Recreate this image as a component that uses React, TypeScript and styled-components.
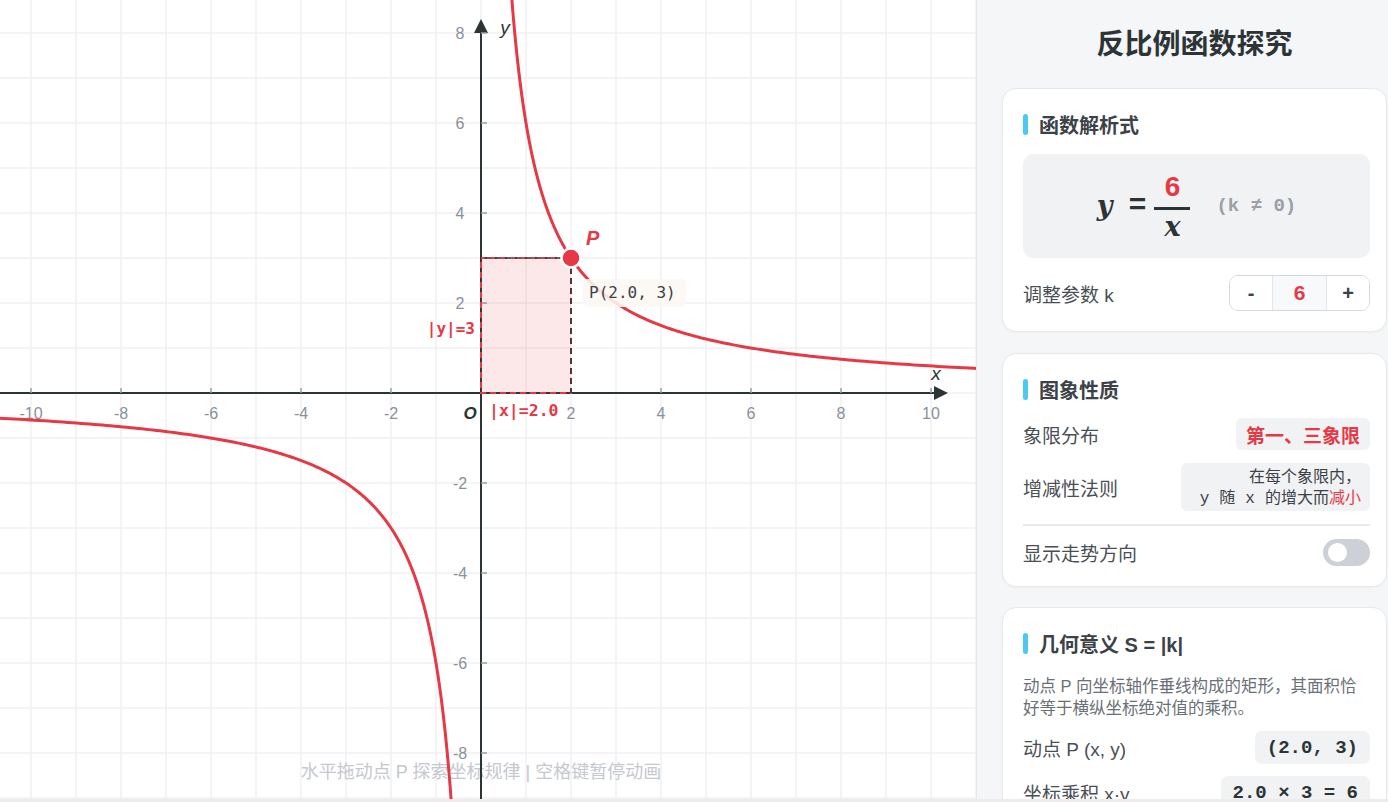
import React from 'react';
import styled, { createGlobalStyle } from 'styled-components';

const K = 6;
const PX = 2.0;
const PY = K / PX;

const OX = 481;
const OY = 393;
const U = 45;
const W = 976;
const H = 799;

const RED = '#e63946';
const INK = '#2d3436';

const sx = (x: number) => OX + x * U;
const sy = (y: number) => OY - y * U;

const GlobalStyle = createGlobalStyle`
  html, body {
    margin: 0;
    padding: 0;
    background: #eeebe8;
  }
  body {
    font-family: "Liberation Sans", "Noto Sans CJK SC", sans-serif;
  }
`;

const Shell = styled.div`
  display: flex;
  height: ${H}px;
  overflow: hidden;
`;

const GraphArea = styled.div`
  flex: 0 0 ${W}px;
  background: #ffffff;
  overflow: hidden;

  svg {
    display: block;
  }
`;

const Panel = styled.aside`
  flex: 1;
  background: #f5f6f8;
  border-left: 1px solid #e5e7eb;
  padding: 25px 1px 0 25px;
  overflow: hidden;
`;

const PanelTitle = styled.h1`
  margin: 0 0 23px;
  height: 40px;
  line-height: 40px;
  text-align: center;
  font-size: 28px;
  font-weight: 700;
  color: ${INK};
`;

const Card = styled.section<{ $mt?: number }>`
  margin-top: ${(p) => p.$mt ?? 0}px;
  background: #ffffff;
  border: 1px solid #e6e8eb;
  border-radius: 14px;
  padding: 21px 16px 20px 20px;
  box-shadow: 0 1px 3px rgba(0, 0, 0, 0.03);
`;

const SectionTitle = styled.h2`
  margin: 0;
  display: flex;
  align-items: center;
  gap: 11px;
  height: 28px;
  font-size: 20px;
  font-weight: 700;
  color: #3d4248;

  &::before {
    content: '';
    width: 5px;
    height: 21px;
    border-radius: 3px;
    background: #4cc9f0;
  }
`;

const FormulaBox = styled.div`
  margin-top: 16px;
  height: 104px;
  border-radius: 10px;
  background: #f1f2f4;
  display: flex;
  align-items: center;
  justify-content: center;
`;

const MathVar = styled.span`
  font-family: "DejaVu Serif", "Liberation Serif", serif;
  font-style: italic;
  font-weight: 700;
  font-size: 27px;
  line-height: 34px;
  color: ${INK};
`;

const Equals = styled.span`
  font-family: "Liberation Mono", "Courier New", monospace;
  font-weight: 700;
  font-size: 30px;
  color: ${INK};
  margin: 0 8px 0 16px;
`;

const Fraction = styled.span`
  display: inline-flex;
  flex-direction: column;
  align-items: center;
  width: 36px;
`;

const Numerator = styled.span`
  font-size: 28px;
  font-weight: 700;
  line-height: 36px;
  color: ${RED};
`;

const FracBar = styled.span`
  width: 36px;
  height: 3px;
  background: ${INK};
  margin: 2px 0 0;
`;

const Condition = styled.span`
  margin-left: 26px;
  font-family: "Liberation Mono", "Courier New", monospace;
  font-weight: 700;
  font-size: 19px;
  color: #9aa0a6;
  white-space: pre;
`;

const Row = styled.div<{ $mt: number; $h: number }>`
  margin-top: ${(p) => p.$mt}px;
  height: ${(p) => p.$h}px;
  display: flex;
  align-items: center;
  justify-content: space-between;
`;

const RowLabel = styled.span`
  font-size: 19px;
  color: #4a4f55;
`;

const Stepper = styled.div`
  display: flex;
  height: 36px;
  border: 1px solid #d5d9de;
  border-radius: 9px;
  overflow: hidden;
  box-sizing: border-box;
`;

const StepBtn = styled.button`
  width: 42px;
  border: 0;
  background: #ffffff;
  font-family: "Liberation Sans", sans-serif;
  font-size: 20px;
  font-weight: 700;
  color: #3d4248;
  padding: 0;
`;

const StepValue = styled.span`
  width: 53px;
  display: flex;
  align-items: center;
  justify-content: center;
  background: #f8f9fa;
  border-left: 1px solid #e3e6e9;
  border-right: 1px solid #e3e6e9;
  font-size: 21px;
  font-weight: 700;
  color: ${RED};
`;

const Badge = styled.span`
  height: 32px;
  padding: 0 10px;
  display: flex;
  align-items: center;
  border-radius: 6px;
  background: #f1f2f4;
  font-size: 19px;
  font-weight: 700;
  color: ${RED};
`;

const RuleBox = styled.div`
  height: 48px;
  box-sizing: border-box;
  padding: 3px 9px;
  border-radius: 6px;
  background: #f1f2f4;
  font-size: 16px;
  line-height: 21px;
  color: #3d4248;
  text-align: right;
`;

const Code = styled.span`
  font-family: "Liberation Mono", "Courier New", monospace;
  font-size: 16px;
  margin: 0 10px;

  &:first-child {
    margin-left: 0;
  }
`;

const Hot = styled.span`
  color: ${RED};
`;

const Divider = styled.hr`
  margin: 13px 0;
  border: 0;
  border-top: 2px solid #e8eaed;
`;

const Toggle = styled.span<{ $on: boolean }>`
  position: relative;
  width: 47px;
  height: 27px;
  border-radius: 14px;
  background: ${(p) => (p.$on ? '#4cc9f0' : '#cdd1d7')};

  &::after {
    content: '';
    position: absolute;
    top: 4px;
    left: ${(p) => (p.$on ? '24px' : '5px')};
    width: 19px;
    height: 19px;
    border-radius: 50%;
    background: #ffffff;
  }
`;

const Desc = styled.p`
  margin: 18px 0 0;
  font-size: 16.5px;
  line-height: 22px;
  color: #6b7077;
`;

const ValueBox = styled.span`
  height: 33px;
  padding: 0 12px;
  display: flex;
  align-items: center;
  border-radius: 7px;
  background: #f1f2f4;
  font-family: "Liberation Mono", "Courier New", monospace;
  font-weight: 700;
  font-size: 19px;
  color: ${INK};
  white-space: pre;
`;

// y = k/x, sampled geometrically so the steep part near the axis stays smooth
const branch = (sign: number, from: number, to: number) => {
  const n = 260;
  const pts: string[] = [];
  for (let i = 0; i <= n; i++) {
    const m = from * Math.pow(to / from, i / n);
    const x = sign * m;
    pts.push(`${sx(x).toFixed(2)},${sy(K / x).toFixed(2)}`);
  }
  return 'M' + pts.join('L');
};

const range = (a: number, b: number) => Array.from({ length: b - a + 1 }, (_, i) => a + i);

const Graph = () => {
  const vLines = range(-11, 11).map(sx).filter((x) => x >= 0 && x <= W);
  const hLines = range(-9, 9).map(sy).filter((y) => y >= 0 && y <= H);
  const xTicks = range(-5, 5).filter((t) => t !== 0).map((t) => t * 2);
  const yTicks = range(-4, 4).filter((t) => t !== 0).map((t) => t * 2);
  const px = sx(PX);
  const py = sy(PY);
  const mono = '"DejaVu Sans Mono", monospace';
  const sans = '"Liberation Sans", "Noto Sans CJK SC", sans-serif';

  return (
    <svg width={W} height={H} viewBox={`0 0 ${W} ${H}`}>
      <g stroke="#f0f1f3" strokeWidth={1.5}>
        {vLines.map((x) => (
          <line key={`v${x}`} x1={x} y1={0} x2={x} y2={H} />
        ))}
        {hLines.map((y) => (
          <line key={`h${y}`} x1={0} y1={y} x2={W} y2={y} />
        ))}
      </g>

      <text x={OX} y={778} textAnchor="middle" fontFamily={sans} fontSize={18} fill="#c5c8ce">
        水平拖动点 P 探索坐标规律 | 空格键暂停动画
      </text>

      <g stroke={INK} strokeWidth={2}>
        <line x1={0} y1={OY} x2={936} y2={OY} />
        <line x1={OX} y1={H} x2={OX} y2={30} />
      </g>
      <polygon points={`948,${OY} 934,${OY - 7} 934,${OY + 7}`} fill={INK} />
      <polygon points={`${OX},19 ${OX - 7},33 ${OX + 7},33`} fill={INK} />

      <g stroke="#9aa0a6" strokeWidth={1.5}>
        {xTicks.map((t) => (
          <line key={`tx${t}`} x1={sx(t)} y1={OY - 5} x2={sx(t)} y2={OY} />
        ))}
        {yTicks.map((t) => (
          <line key={`ty${t}`} x1={OX} y1={sy(t)} x2={OX + 6} y2={sy(t)} />
        ))}
      </g>
      <g fontFamily={sans} fontSize={16} fill="#8a9099" textAnchor="middle">
        {xTicks.map((t) => (
          <text key={`lx${t}`} x={sx(t)} y={419}>
            {t}
          </text>
        ))}
        {yTicks.map((t) => (
          <text key={`ly${t}`} x={460} y={sy(t) + 6}>
            {t}
          </text>
        ))}
      </g>
      <text x={470} y={419} textAnchor="middle" fontFamily={sans} fontSize={17} fontWeight={700} fontStyle="italic" fill={INK}>
        O
      </text>
      <text x={936} y={380} textAnchor="middle" fontFamily={sans} fontSize={19} fontStyle="italic" fill={INK}>
        x
      </text>
      <text x={505} y={34} textAnchor="middle" fontFamily={sans} fontSize={19} fontStyle="italic" fill={INK}>
        y
      </text>

      <g fill="none" stroke={RED} strokeWidth={3} strokeLinecap="round">
        <path d={branch(1, 0.66, 11.2)} />
        <path d={branch(-1, 11.2, 0.64)} />
      </g>

      <rect
        x={OX}
        y={py}
        width={px - OX}
        height={OY - py}
        fill="rgba(230,57,70,0.12)"
        stroke={RED}
        strokeWidth={2}
        strokeDasharray="6 4"
      />
      <g stroke={INK} strokeWidth={1.6} strokeDasharray="6 4">
        <line x1={px} y1={py} x2={px} y2={OY} />
        <line x1={px} y1={py} x2={OX} y2={py} />
      </g>

      <text x={475} y={334} textAnchor="end" fontFamily={mono} fontSize={16} fontWeight={700} fill={RED}>
        |y|={PY}
      </text>
      <text x={489} y={416} fontFamily={mono} fontSize={16.5} fontWeight={700} fill={RED}>
        |x|={PX.toFixed(1)}
      </text>

      <rect x={583} y={279} width={103} height={28} rx={5} fill="rgba(252,247,242,0.88)" />
      <text x={589} y={298} fontFamily={mono} fontSize={16} fill="#3d4248">
        P({PX.toFixed(1)}, {PY})
      </text>

      <circle cx={px} cy={py} r={9.5} fill={RED} stroke="#ffffff" strokeWidth={2.5} />
      <text x={586} y={245} fontFamily={sans} fontSize={20} fontWeight={700} fontStyle="italic" fill={RED}>
        P
      </text>
    </svg>
  );
};

export default function App() {
  return (
    <>
      <GlobalStyle />
      <Shell>
        <GraphArea>
          <Graph />
        </GraphArea>

        <Panel>
          <PanelTitle>反比例函数探究</PanelTitle>

          <Card>
            <SectionTitle>函数解析式</SectionTitle>
            <FormulaBox>
              <MathVar>y</MathVar>
              <Equals>=</Equals>
              <Fraction>
                <Numerator>{K}</Numerator>
                <FracBar />
                <MathVar>x</MathVar>
              </Fraction>
              <Condition>(k ≠ 0)</Condition>
            </FormulaBox>
            <Row $mt={17} $h={36}>
              <RowLabel>调整参数 k</RowLabel>
              <Stepper>
                <StepBtn>-</StepBtn>
                <StepValue>{K}</StepValue>
                <StepBtn>+</StepBtn>
              </Stepper>
            </Row>
          </Card>

          <Card $mt={21}>
            <SectionTitle>图象性质</SectionTitle>
            <Row $mt={15} $h={32}>
              <RowLabel>象限分布</RowLabel>
              <Badge>第一、三象限</Badge>
            </Row>
            <Row $mt={13} $h={48}>
              <RowLabel>增减性法则</RowLabel>
              <RuleBox>
                在每个象限内，
                <br />
                <Code>y</Code>随<Code>x</Code>的增大而<Hot>减小</Hot>
              </RuleBox>
            </Row>
            <Divider />
            <Row $mt={0} $h={27}>
              <RowLabel>显示走势方向</RowLabel>
              <Toggle $on={false} />
            </Row>
          </Card>

          <Card $mt={20}>
            <SectionTitle>几何意义 S = |k|</SectionTitle>
            <Desc>动点 P 向坐标轴作垂线构成的矩形，其面积恰好等于横纵坐标绝对值的乘积。</Desc>
            <Row $mt={12} $h={33}>
              <RowLabel>动点 P (x, y)</RowLabel>
              <ValueBox>({PX.toFixed(1)}, {PY})</ValueBox>
            </Row>
            <Row $mt={12} $h={33}>
              <RowLabel>坐标乘积 x·y</RowLabel>
              <ValueBox>{PX.toFixed(1)} × {PY} = {K}</ValueBox>
            </Row>
          </Card>
        </Panel>
      </Shell>
    </>
  );
}
